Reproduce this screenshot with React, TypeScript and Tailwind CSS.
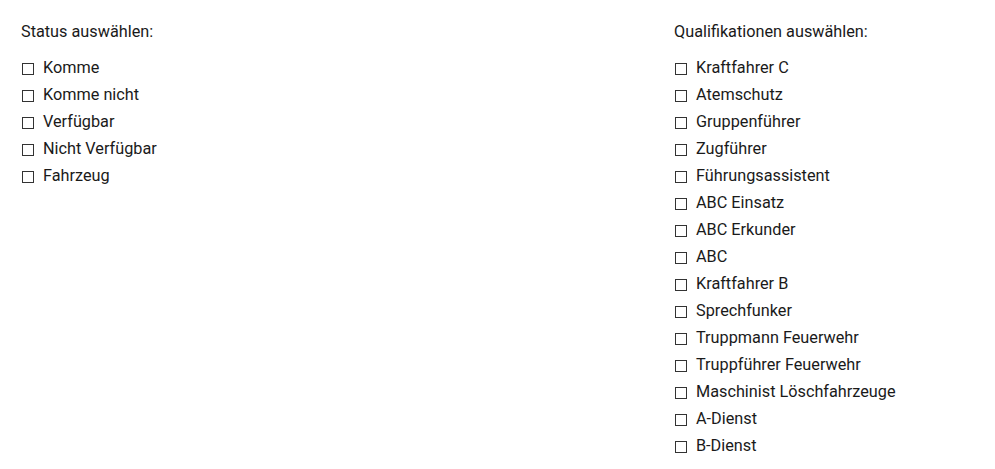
const status = ["Komme", "Komme nicht", "Verfügbar", "Nicht Verfügbar", "Fahrzeug"];

const qualis = [
  "Kraftfahrer C",
  "Atemschutz",
  "Gruppenführer",
  "Zugführer",
  "Führungsassistent",
  "ABC Einsatz",
  "ABC Erkunder",
  "ABC",
  "Kraftfahrer B",
  "Sprechfunker",
  "Truppmann Feuerwehr",
  "Truppführer Feuerwehr",
  "Maschinist Löschfahrzeuge",
  "A-Dienst",
  "B-Dienst",
];

function CheckList({ title, items }: { title: string; items: string[] }) {
  return (
    <div>
      <div className="text-[16.25px] leading-5 mb-[13px]">{title}</div>
      {items.map((item) => (
        <label key={item} className="flex items-center h-[27px] cursor-pointer">
          <span className="w-3 h-3 border border-[#333] bg-white ml-px mr-[9px] shrink-0" />
          <span className="text-[16.25px]">{item}</span>
        </label>
      ))}
    </div>
  );
}

export default function App() {
  return (
    <div
      className="flex bg-white text-[#1a1a1a] w-[995px] h-[469px] pl-[21px] pt-[22px]"
      style={{ fontFamily: "Roboto, 'Liberation Sans', sans-serif" }}
    >
      {/* Status */}
      <div className="w-[653px]">
        <CheckList title="Status auswählen:" items={status} />
      </div>

      {/* Qualifikationen */}
      <div>
        <CheckList title="Qualifikationen auswählen:" items={qualis} />
      </div>
    </div>
  );
}
